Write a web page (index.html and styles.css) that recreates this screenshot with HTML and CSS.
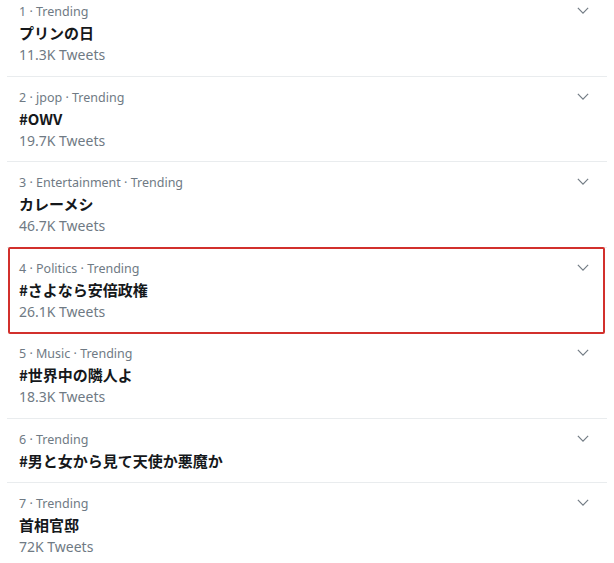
FILE: index.html
```html
<!DOCTYPE html>
<html lang="ja">
<head>
<meta charset="utf-8">
<title>Trends</title>
<link rel="stylesheet" href="styles.css">
</head>
<body>
<div class="trends">
  <div class="trend trend--first">
    <div class="trend__body">
      <div class="trend__meta">1 · Trending</div>
      <div class="trend__title">プリンの日</div>
      <div class="trend__count">11.3K Tweets</div>
    </div>
    <svg class="trend__caret" viewBox="0 0 14 8"><polyline points="1,1 7,7 13,1"/></svg>
  </div>
  <div class="trend">
    <div class="trend__body">
      <div class="trend__meta">2 · jpop · Trending</div>
      <div class="trend__title">#OWV</div>
      <div class="trend__count">19.7K Tweets</div>
    </div>
    <svg class="trend__caret" viewBox="0 0 14 8"><polyline points="1,1 7,7 13,1"/></svg>
  </div>
  <div class="trend">
    <div class="trend__body">
      <div class="trend__meta">3 · Entertainment · Trending</div>
      <div class="trend__title">カレーメシ</div>
      <div class="trend__count">46.7K Tweets</div>
    </div>
    <svg class="trend__caret" viewBox="0 0 14 8"><polyline points="1,1 7,7 13,1"/></svg>
  </div>
  <div class="trend trend--marked">
    <div class="trend__body">
      <div class="trend__meta">4 · Politics · Trending</div>
      <div class="trend__title">#さよなら安倍政権</div>
      <div class="trend__count">26.1K Tweets</div>
    </div>
    <svg class="trend__caret" viewBox="0 0 14 8"><polyline points="1,1 7,7 13,1"/></svg>
  </div>
  <div class="trend">
    <div class="trend__body">
      <div class="trend__meta">5 · Music · Trending</div>
      <div class="trend__title">#世界中の隣人よ</div>
      <div class="trend__count">18.3K Tweets</div>
    </div>
    <svg class="trend__caret" viewBox="0 0 14 8"><polyline points="1,1 7,7 13,1"/></svg>
  </div>
  <div class="trend">
    <div class="trend__body">
      <div class="trend__meta">6 · Trending</div>
      <div class="trend__title">#男と女から見て天使か悪魔か</div>
    </div>
    <svg class="trend__caret" viewBox="0 0 14 8"><polyline points="1,1 7,7 13,1"/></svg>
  </div>
  <div class="trend trend--last">
    <div class="trend__body">
      <div class="trend__meta">7 · Trending</div>
      <div class="trend__title">首相官邸</div>
      <div class="trend__count">72K Tweets</div>
    </div>
    <svg class="trend__caret" viewBox="0 0 14 8"><polyline points="1,1 7,7 13,1"/></svg>
  </div>
</div>
</body>
</html>
```
FILE: styles.css
```css
html, body {
  margin: 0;
  padding: 0;
  background: #ffffff;
}

body {
  font-family: "Noto Sans", "Noto Sans CJK JP", sans-serif;
  overflow: hidden;
}

.trends {
  width: 600px;
  margin-left: 7px;
}

.trend {
  position: relative;
  display: flex;
  justify-content: space-between;
  align-items: flex-start;
  padding: 11px 18px 10.5px 12px;
  border-bottom: 1px solid #e9ecee;
}

.trend--first {
  padding-top: 2px;
}

.trend--last {
  border-bottom: none;
}

.trend--marked {
  border-bottom-color: transparent;
}

.trend--marked::after {
  content: "";
  position: absolute;
  left: 1px;
  right: 2px;
  top: -1px;
  bottom: -2px;
  border: 2px solid #d2302c;
  border-radius: 2px;
  pointer-events: none;
}

.trend__body {
  display: flex;
  flex-direction: column;
}

.trend__meta {
  font-size: 12.5px;
  line-height: 20px;
  color: #6f7a84;
}

.trend__title {
  font-family: "Noto Sans CJK JP", "Noto Sans", sans-serif;
  font-size: 15px;
  font-weight: 700;
  line-height: 22px;
  color: #15181b;
}

.trend__count {
  font-size: 14px;
  line-height: 21px;
  color: #6f7a84;
}

.trend__caret {
  width: 12px;
  height: 7px;
  margin-top: 5px;
  fill: none;
  stroke: #737c85;
  stroke-width: 1.4;
}
```
